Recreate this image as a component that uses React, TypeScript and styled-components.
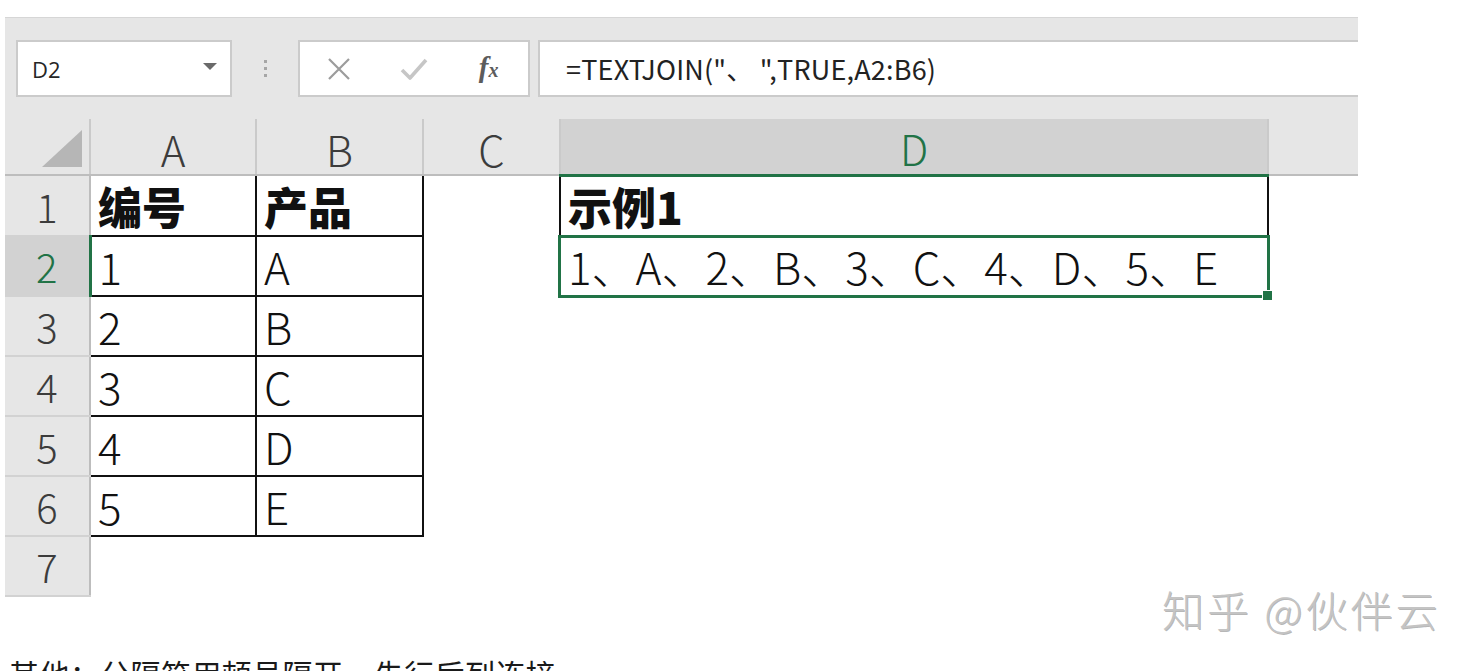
import React from "react";
import styled, { createGlobalStyle, css } from "styled-components";

const GlobalStyle = createGlobalStyle`
  html, body { margin: 0; padding: 0; background: #ffffff; }
  body { font-family: "Noto Sans CJK SC", "Noto Sans", sans-serif; }
  * { box-sizing: border-box; }
`;

const Page = styled.div`
  position: relative;
  width: 1476px;
  height: 671px;
  overflow: hidden;
  padding-top: 17px;
`;

const Sheet = styled.div`
  margin-left: 5px;
  width: 1353px;
`;

const FormulaBar = styled.div`
  height: 102px;
  background: #e6e6e6;
  border-top: 1px solid #d6d6d6;
  padding: 22px 0 22px 11px;
  display: flex;
  align-items: stretch;
`;

const Field = styled.div`
  background: #ffffff;
  border: 2px solid #cbcbcb;
  display: flex;
  align-items: center;
`;

const NameBox = styled(Field)`
  width: 216px;
  padding: 0 13px 0 14px;
  justify-content: space-between;
  font-family: "Open Sans", "Noto Sans", sans-serif;
  font-size: 22px;
  color: #262626;
`;

const Caret = styled.span`
  width: 0;
  height: 0;
  border-left: 7px solid transparent;
  border-right: 7px solid transparent;
  border-top: 7px solid #6a6a6a;
  margin-top: -4px;
`;

const Grip = styled.div`
  width: 66px;
  display: flex;
  flex-direction: column;
  align-items: center;
  justify-content: center;
  gap: 4px;
`;

const Dot = styled.span`
  width: 3px;
  height: 3px;
  background: #a6a6a6;
`;

const ButtonBox = styled(Field)`
  width: 232px;
  justify-content: space-around;
  padding: 0 2px;
`;

const IconSlot = styled.span`
  display: flex;
  align-items: center;
  justify-content: center;
  width: 30px;
  height: 30px;
`;

const Fx = styled.span`
  font-family: "Liberation Serif", "DejaVu Serif", serif;
  font-style: italic;
  font-weight: 700;
  color: #5c5c5c;
  font-size: 29px;
  line-height: 1;
  margin-top: -2px;
  white-space: nowrap;
  & > small {
    font-size: 20px;
    margin-left: 0px;
  }
`;

const FormulaInput = styled(Field)`
  flex: 1;
  margin-left: 8px;
  border-right: none;
  padding-left: 26px;
  font-family: "Noto Sans CJK SC", sans-serif;
  font-size: 27px;
  color: #222222;
  letter-spacing: 0.2px;
`;

const Grid = styled.table`
  border-collapse: collapse;
  table-layout: fixed;
  width: 1353px;
  font-family: "Noto Sans CJK SC", sans-serif;
`;

const Col = styled.col<{ $w: number }>`
  width: ${(p) => p.$w}px;
`;

const HeadRow = styled.tr`
  height: 56px;
`;

const BodyRow = styled.tr<{ $h: number }>`
  height: ${(p) => p.$h}px;
`;

const Corner = styled.th`
  position: relative;
  padding: 0;
  background: #e6e6e6;
  border-right: 2px solid #cacaca;
  border-bottom: 2px solid #bdbdbd;
  & > svg {
    position: absolute;
    right: 7px;
    bottom: 7px;
  }
`;

const ColHead = styled.th<{ $active?: boolean; $blank?: boolean }>`
  padding: 4px 0 0;
  background: ${(p) => (p.$active ? "#d2d2d2" : "#e6e6e6")};
  color: ${(p) => (p.$active ? "#217346" : "#3c3c3c")};
  font-weight: 300;
  font-size: 42px;
  line-height: 50px;
  text-align: center;
  border-right: ${(p) => (p.$blank ? "none" : "2px solid #cacaca")};
  border-bottom: ${(p) => (p.$active ? "3px solid #217346" : "2px solid #bdbdbd")};
`;

const RowHead = styled.th<{ $active?: boolean }>`
  padding: 0;
  background: ${(p) => (p.$active ? "#d2d2d2" : "#e6e6e6")};
  color: ${(p) => (p.$active ? "#217346" : "#3c3c3c")};
  font-weight: 300;
  font-size: 40px;
  line-height: 58px;
  text-align: center;
  border-right: ${(p) => (p.$active ? "3px solid #217346" : "2px solid #bdbdbd")};
  border-bottom: 2px solid #d2d2d2;
`;

const Cell = styled.td<{ $boxed?: boolean; $bold?: boolean; $selected?: boolean }>`
  position: relative;
  padding: 0 0 0 7px;
  font-size: 44px;
  line-height: 58px;
  font-weight: ${(p) => (p.$bold ? 900 : 300)};
  color: #111111;
  white-space: nowrap;
  overflow: visible;
  ${(p) =>
    p.$boxed &&
    css`
      border: 2px solid #111111;
    `}
  ${(p) =>
    p.$selected &&
    css`
      &::after {
        content: "";
        position: absolute;
        left: -3px;
        right: -3px;
        top: -2px;
        bottom: -3px;
        border: 3px solid #217346;
        pointer-events: none;
      }
      &::before {
        content: "";
        position: absolute;
        right: -6px;
        bottom: -6px;
        width: 9px;
        height: 9px;
        background: #217346;
        border: 1px solid #ffffff;
        z-index: 1;
      }
    `}
`;

const Note = styled.p`
  margin: 56px 0 0 9px;
  font-family: "Noto Sans CJK SC", sans-serif;
  font-size: 30px;
  line-height: 40px;
  letter-spacing: 0.4px;
  color: #1a1a1a;
  white-space: nowrap;
`;

const Watermark = styled.div`
  position: absolute;
  left: 1162px;
  top: 578px;
  font-family: "Noto Sans CJK SC", sans-serif;
  font-size: 42px;
  font-weight: 300;
  letter-spacing: 3px;
  color: #c4c4c4;
  text-shadow: 1px 1px 0 rgba(0, 0, 0, 0.28);
  white-space: nowrap;
`;

type Row = { n: number; a?: string; b?: string; d?: string; h: number };

const rows: Row[] = [
  { n: 1, a: "编号", b: "产品", d: "示例1", h: 61 },
  { n: 2, a: "1", b: "A", d: "1、A、2、B、3、C、4、D、5、E", h: 60 },
  { n: 3, a: "2", b: "B", h: 60 },
  { n: 4, a: "3", b: "C", h: 60 },
  { n: 5, a: "4", b: "D", h: 60 },
  { n: 6, a: "5", b: "E", h: 60 },
  { n: 7, h: 60 },
];

const widths = [85, 166, 167, 137, 708, 90];

export default function App() {
  return (
    <>
      <GlobalStyle />
      <Page>
        <Sheet>
          <FormulaBar>
            <NameBox>
              <span>D2</span>
              <Caret />
            </NameBox>
            <Grip>
              <Dot />
              <Dot />
              <Dot />
            </Grip>
            <ButtonBox>
              <IconSlot>
                <svg width="24" height="22" viewBox="0 0 24 22">
                  <path d="M2 1 L22 21 M22 1 L2 21" stroke="#9c9c9c" strokeWidth="2.2" fill="none" />
                </svg>
              </IconSlot>
              <IconSlot>
                <svg width="28" height="24" viewBox="0 0 28 24">
                  <path d="M2 13 L10 21 L26 3" stroke="#c6c6c6" strokeWidth="3.6" fill="none" strokeLinejoin="round" />
                </svg>
              </IconSlot>
              <IconSlot>
                <Fx>
                  f<small>x</small>
                </Fx>
              </IconSlot>
            </ButtonBox>
            <FormulaInput>=TEXTJOIN("、 ",TRUE,A2:B6)</FormulaInput>
          </FormulaBar>
          <Grid>
            <colgroup>
              {widths.map((w, i) => (
                <Col key={i} $w={w} />
              ))}
            </colgroup>
            <thead>
              <HeadRow>
                <Corner>
                  <svg width="40" height="37" viewBox="0 0 40 37">
                    <polygon points="40,0 40,37 0,37" fill="#b6b6b6" />
                  </svg>
                </Corner>
                <ColHead>A</ColHead>
                <ColHead>B</ColHead>
                <ColHead>C</ColHead>
                <ColHead $active>D</ColHead>
                <ColHead $blank />
              </HeadRow>
            </thead>
            <tbody>
              {rows.map((r) => {
                const boxed = r.n <= 6;
                return (
                  <BodyRow key={r.n} $h={r.h}>
                    <RowHead $active={r.n === 2}>{r.n}</RowHead>
                    <Cell $boxed={boxed} $bold={r.n === 1}>
                      {r.a}
                    </Cell>
                    <Cell $boxed={boxed} $bold={r.n === 1}>
                      {r.b}
                    </Cell>
                    <Cell />
                    <Cell $boxed={r.n <= 2} $bold={r.n === 1} $selected={r.n === 2}>
                      {r.d}
                    </Cell>
                    <Cell />
                  </BodyRow>
                );
              })}
            </tbody>
          </Grid>
        </Sheet>
        <Note>其他：分隔符用顿号隔开，先行后列连接</Note>
        <Watermark>知乎 @伙伴云</Watermark>
      </Page>
    </>
  );
}
